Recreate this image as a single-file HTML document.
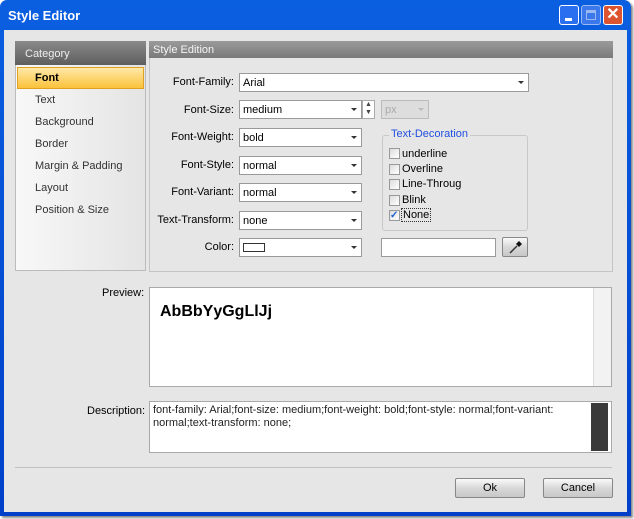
<!DOCTYPE html>
<html><head><style>
*{box-sizing:border-box;margin:0;padding:0}
body{width:634px;height:519px;background:#fff;font-family:"Liberation Sans",sans-serif;font-size:11px;color:#000;position:relative;overflow:hidden}
.a{position:absolute}
.win{left:0;top:0;width:631px;height:516px;background:linear-gradient(#0a5fe0,#0040c8);border-radius:7px 7px 0 0;box-shadow:2px 2px 2px #888}
.title{left:8px;top:8px;color:#fff;font-weight:bold;font-size:13px}
.body{left:4px;top:30px;width:623px;height:482px;background:#e6e6e6}
.inp{background:#fff;border:1px solid #9a9a9a;height:19px;padding:3px 3px 1px;line-height:13px}
.arr{position:absolute;right:4px;top:7px;width:0;height:0;border-left:3px solid transparent;border-right:3px solid transparent;border-top:3px solid #333}
.lbl{text-align:right;width:100px;left:134px}
.cb{width:11px;height:11px;border:1px solid #999;background:linear-gradient(135deg,#ddd,#fff)}
.btn{border:1px solid #888;background:linear-gradient(#fafafa,#d8d8d8 50%,#c8c8c8);text-align:center;line-height:18px;border-radius:2px}
.cat{left:35px;color:#333}
</style></head><body>
<div class="a win"></div>
<div class="a title">Style Editor</div>
<div class="a" style="left:559px;top:5px;width:20px;height:20px;border:1px solid #fff;border-radius:3px;background:#2a6ff0"><div class="a" style="left:5px;top:12px;width:7px;height:3px;background:#fff"></div></div>
<div class="a" style="left:581px;top:5px;width:20px;height:20px;border:1px solid #9bb8f0;border-radius:3px;background:#3a78ec"><div class="a" style="left:4px;top:4px;width:10px;height:10px;border:1px solid #9bb8f0;border-top-width:3px"></div></div>
<div class="a" style="left:603px;top:5px;width:20px;height:20px;border:1px solid #fff;border-radius:3px;background:#dd5530;color:#fff;font-weight:bold;font-size:16px;text-align:center;line-height:18px">✕</div>
<div class="a body"></div>

<div class="a" style="left:15px;top:41px;width:131px;height:230px;background:linear-gradient(90deg,#f8f8f8,#e4e4e4);border:1px solid #bbb"></div>
<div class="a" style="left:15px;top:41px;width:131px;height:24px;background:linear-gradient(#8a8a8a,#5e5e5e);color:#eee;padding:7px 10px;font-size:11px">Category</div>
<div class="a" style="left:17px;top:67px;width:127px;height:22px;background:linear-gradient(#ffe9a8,#fbc23c);border:1px solid #e0a020;font-weight:bold;padding:4px 17px">Font</div>
<div class="a cat" style="top:94px">Text</div>
<div class="a cat" style="top:116px">Background</div>
<div class="a cat" style="top:138px">Border</div>
<div class="a cat" style="top:160px">Margin &amp; Padding</div>
<div class="a cat" style="top:182px">Layout</div>
<div class="a cat" style="top:204px">Position &amp; Size</div>

<div class="a" style="left:149px;top:41px;width:464px;height:231px;border:1px solid #c4c4c4;background:#e6e6e6"></div>
<div class="a" style="left:149px;top:41px;width:464px;height:17px;background:linear-gradient(#9a9a9a,#7a7a7a);color:#f4f4f4;padding:3px 4px">Style Edition</div>

<div class="a lbl" style="top:76px">Font-Family:</div>
<div class="a inp" style="left:239px;top:73px;width:290px">Arial<span class="arr"></span></div>
<div class="a lbl" style="top:104px">Font-Size:</div>
<div class="a inp" style="left:239px;top:100px;width:123px">medium<span class="arr"></span></div>
<div class="a" style="left:362px;top:100px;width:13px;height:19px;background:#fff;border:1px solid #aaa;font-size:7px;text-align:center;line-height:8px;color:#444">▲<br>▼</div>
<div class="a inp" style="left:381px;top:100px;width:48px;background:#ddd;border-color:#bbb;color:#aaa">px<span class="arr" style="border-top-color:#bbb"></span></div>
<div class="a lbl" style="top:131px">Font-Weight:</div>
<div class="a inp" style="left:239px;top:128px;width:123px">bold<span class="arr"></span></div>
<div class="a lbl" style="top:159px">Font-Style:</div>
<div class="a inp" style="left:239px;top:156px;width:123px">normal<span class="arr"></span></div>
<div class="a lbl" style="top:186px">Font-Variant:</div>
<div class="a inp" style="left:239px;top:183px;width:123px">normal<span class="arr"></span></div>
<div class="a lbl" style="top:214px">Text-Transform:</div>
<div class="a inp" style="left:239px;top:211px;width:123px">none<span class="arr"></span></div>
<div class="a lbl" style="top:241px">Color:</div>
<div class="a inp" style="left:239px;top:238px;width:123px"><div style="width:22px;height:9px;border:1px solid #333;margin-top:1px"></div><span class="arr"></span></div>

<div class="a" style="left:382px;top:135px;width:146px;height:96px;border:1px solid #c8c8c8;border-radius:3px"></div>
<div class="a" style="left:389px;top:128px;background:#e6e6e6;color:#2050e0;padding:0 2px">Text-Decoration</div>
<div class="a cb" style="left:389px;top:148px"></div><div class="a" style="left:402px;top:148px">underline</div>
<div class="a cb" style="left:389px;top:164px"></div><div class="a" style="left:402px;top:163px">Overline</div>
<div class="a cb" style="left:389px;top:179px"></div><div class="a" style="left:402px;top:178px">Line-Throug</div>
<div class="a cb" style="left:389px;top:195px"></div><div class="a" style="left:402px;top:194px">Blink</div>
<div class="a cb" style="left:389px;top:210px;color:#2060d0;font-size:10px;line-height:9px;font-weight:bold">✓</div><div class="a" style="left:401px;top:208px;border:1px dotted #333;padding:0 1px">None</div>

<div class="a inp" style="left:381px;top:238px;width:115px"></div>
<div class="a btn" style="left:502px;top:237px;width:26px;height:20px"><svg width="24" height="18" viewBox="0 0 24 18"><path d="M7 15 L14 8" stroke="#333" stroke-width="1.5"/><path d="M13 6 L16 3 L19 6 L16 9 Z" fill="#111"/></svg></div>

<div class="a" style="left:102px;top:287px">Preview:</div>
<div class="a" style="left:149px;top:287px;width:463px;height:100px;background:#fff;border:1px solid #aaa"></div>
<div class="a" style="left:593px;top:288px;width:18px;height:98px;background:#f2f2f2;border-left:1px solid #ddd"></div>
<div class="a" style="left:160px;top:303px;font-weight:bold;font-size:16px">AbBbYyGgLlJj</div>

<div class="a" style="left:87px;top:405px">Description:</div>
<div class="a" style="left:149px;top:401px;width:463px;height:52px;background:#fff;border:1px solid #aaa;padding:2px 3px;line-height:13px;color:#222">font-family: Arial;font-size: medium;font-weight: bold;font-style: normal;font-variant:<br>normal;text-transform: none;</div>
<div class="a" style="left:591px;top:403px;width:17px;height:48px;background:#3a3a3a"></div>

<div class="a" style="left:15px;top:467px;width:597px;height:1px;background:#c0c0c0"></div>
<div class="a btn" style="left:455px;top:478px;width:70px;height:20px">Ok</div>
<div class="a btn" style="left:543px;top:478px;width:70px;height:20px">Cancel</div>
</body></html>
